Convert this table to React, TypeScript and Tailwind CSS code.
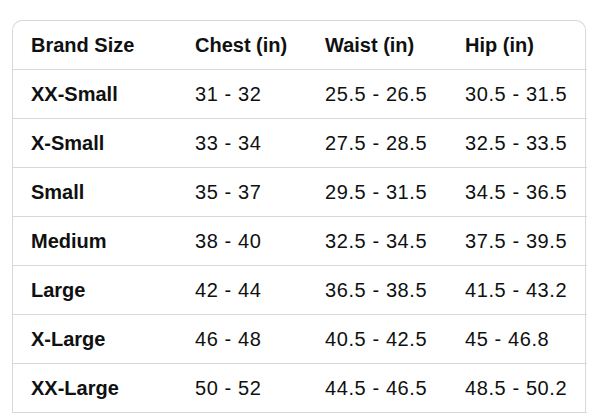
import React from 'react';

const rows: string[][] = [
  ['XX-Small', '31 - 32', '25.5 - 26.5', '30.5 - 31.5'],
  ['X-Small', '33 - 34', '27.5 - 28.5', '32.5 - 33.5'],
  ['Small', '35 - 37', '29.5 - 31.5', '34.5 - 36.5'],
  ['Medium', '38 - 40', '32.5 - 34.5', '37.5 - 39.5'],
  ['Large', '42 - 44', '36.5 - 38.5', '41.5 - 43.2'],
  ['X-Large', '46 - 48', '40.5 - 42.5', '45 - 46.8'],
  ['XX-Large', '50 - 52', '44.5 - 46.5', '48.5 - 50.2'],
];

const headers = ['Brand Size', 'Chest (in)', 'Waist (in)', 'Hip (in)'];
const widths = ['w-[164px]', 'w-[130px]', 'w-[140px]', 'w-[140px]'];

export default function App() {
  return (
    <div className="w-[600px] h-[417px] overflow-hidden bg-white pt-5 pl-3 font-['Liberation_Sans',Arial,sans-serif] text-[#0f1111]">
      <div className="w-[574px] rounded-tl-[10px] rounded-tr-[10px] border-l border-t border-r border-[#d5d9d9]">
        <table className="w-full table-fixed border-collapse text-[20px]">
          <thead>
            <tr className="h-[48px] border-b border-[#d5d9d9]">
              {headers.map((h, i) => (
                <th key={h} className={`${widths[i]} pl-[18px] text-left font-bold`}>
                  {h}
                </th>
              ))}
            </tr>
          </thead>
          <tbody>
            {rows.map(r => (
              <tr key={r[0]} className="h-[49px] border-b border-[#d5d9d9]">
                {r.map((c, i) => (
                  <td
                    key={i}
                    className={`pl-[18px] ${i === 0 ? 'font-bold' : 'tracking-[0.6px]'}`}
                  >
                    {c}
                  </td>
                ))}
              </tr>
            ))}
          </tbody>
        </table>
      </div>
    </div>
  );
}
